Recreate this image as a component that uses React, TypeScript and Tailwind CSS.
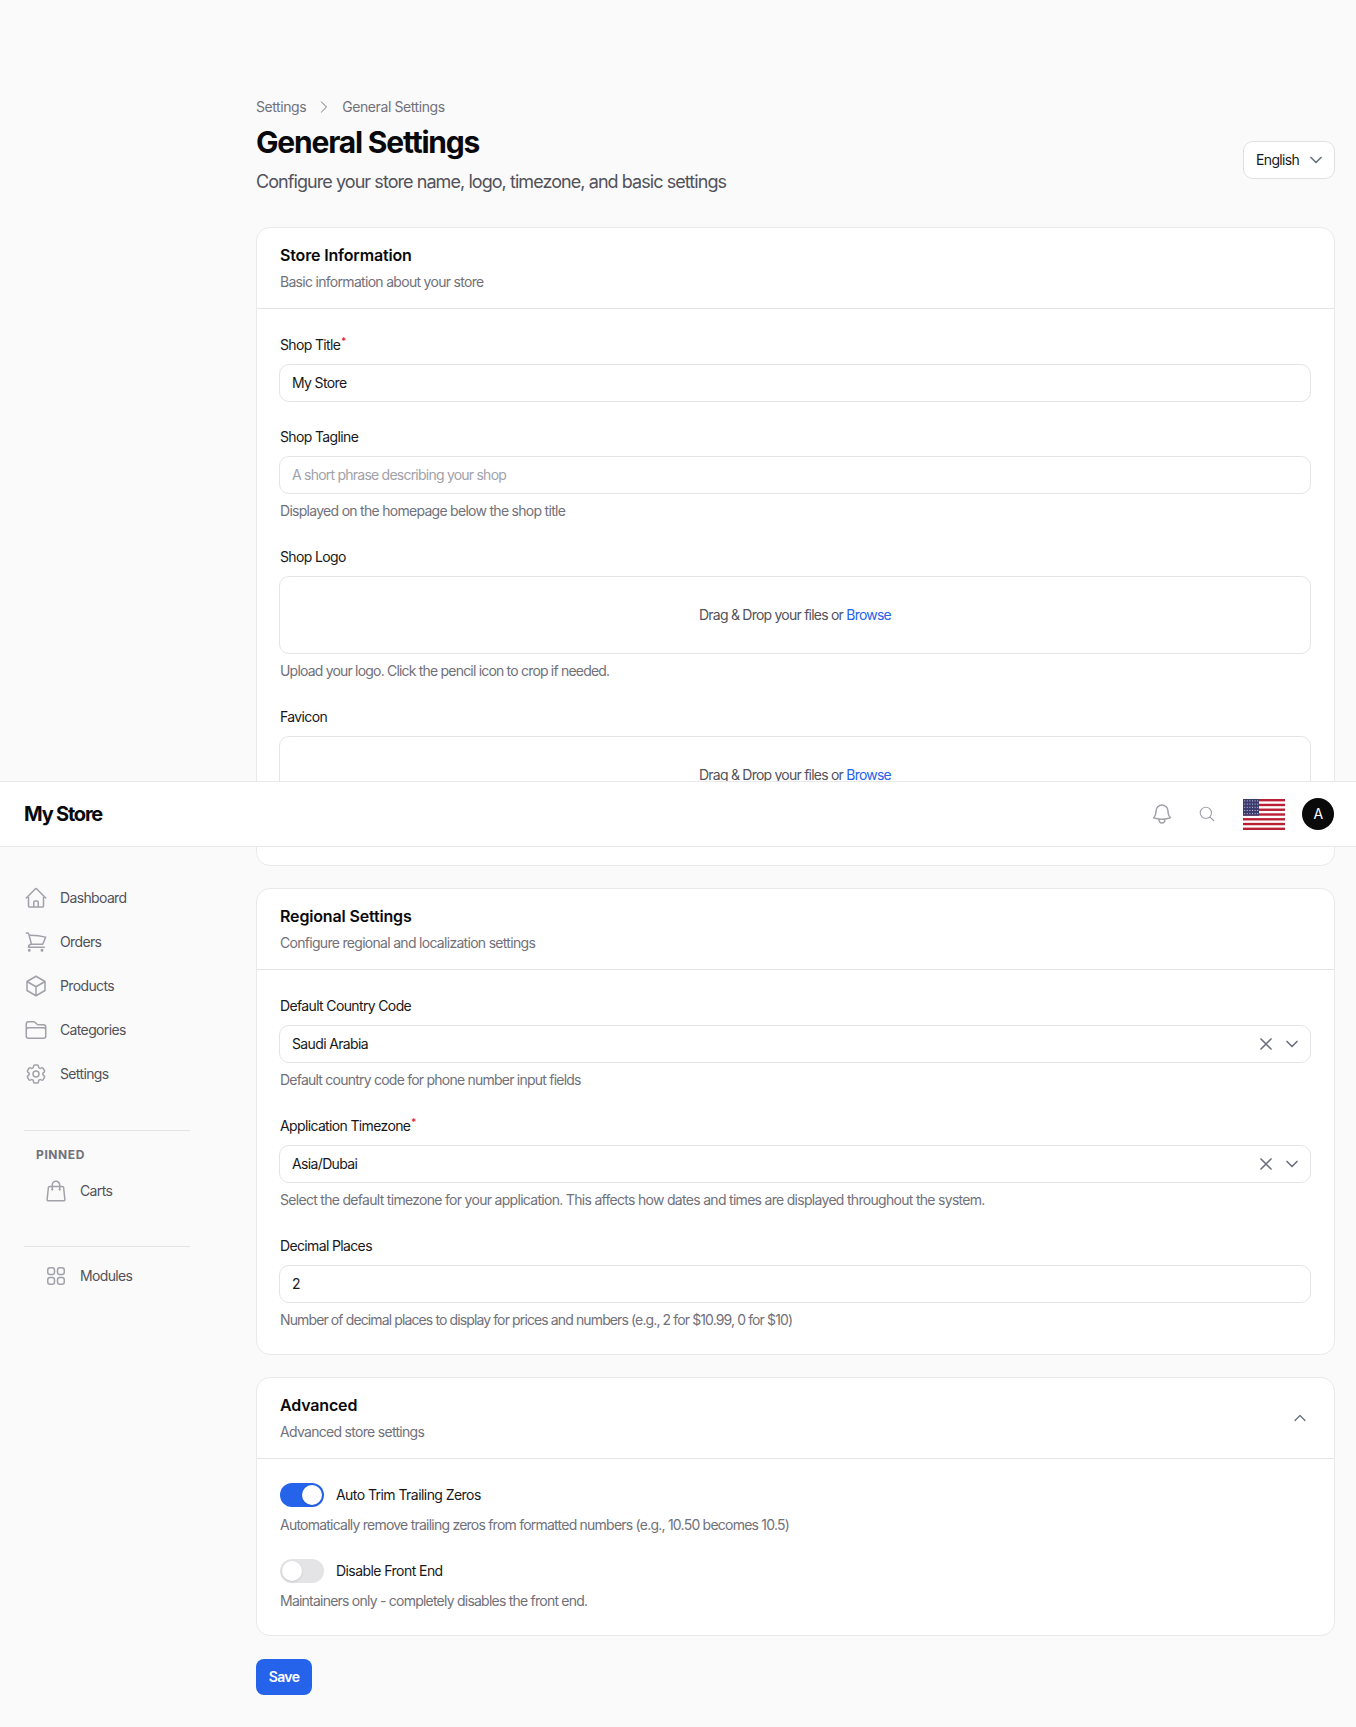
import type { ReactNode } from "react";
import {
  HiOutlineBell,
  HiOutlineCog6Tooth,
  HiOutlineCube,
  HiOutlineFolder,
  HiOutlineHome,
  HiOutlineMagnifyingGlass,
  HiOutlineShoppingBag,
  HiOutlineShoppingCart,
  HiOutlineSquares2X2,
  HiOutlineXMark,
  HiOutlineChevronDown,
  HiOutlineChevronRight,
  HiOutlineChevronUp,
} from "react-icons/hi2";

const navItems = [
  { label: "Dashboard", icon: HiOutlineHome },
  { label: "Orders", icon: HiOutlineShoppingCart },
  { label: "Products", icon: HiOutlineCube },
  { label: "Categories", icon: HiOutlineFolder },
  { label: "Settings", icon: HiOutlineCog6Tooth },
];

const UsFlag = () => (
  <svg width="42" height="31" viewBox="0 0 42 31" aria-hidden="true">
    <rect width="42" height="31" fill="#fff" />
    {[0, 1, 2, 3, 4, 5, 6].map((i) => (
      <rect key={i} y={i * 4.77} width="42" height="2.38" fill="#b92036" />
    ))}
    <rect width="16" height="16.7" fill="#3c3b6e" />
    {[0, 1, 2, 3, 4].map((r) =>
      [0, 1, 2, 3, 4, 5].map((c) => (
        <rect key={`${r}-${c}`} x={1.2 + c * 2.6} y={1.4 + r * 3.2} width="1" height="1" fill="#c9c9e0" />
      ))
    )}
  </svg>
);

const Label = ({ children, required }: { children: ReactNode; required?: boolean }) => (
  <div className="h-5 text-sm leading-5 text-[#18181b]">
    {children}
    {required && <sup className="ml-px text-[10px] text-red-600">*</sup>}
  </div>
);

const Help = ({ children, tracking = "tracking-[-0.055em]" }: { children: ReactNode; tracking?: string }) => (
  <p className={`mt-[7px] h-5 text-sm leading-5 text-[#71717a] ${tracking}`}>{children}</p>
);

const TextBox = ({ value, placeholder }: { value?: string; placeholder?: string }) => (
  <div
    className={`-ml-px mt-[9px] flex h-[38px] items-center rounded-[10px] border border-[#e4e4e7] bg-white px-3 text-sm ${
      value ? "text-[#18181b]" : "tracking-[-0.055em] text-[#a1a1aa]"
    }`}
  >
    {value ?? placeholder}
  </div>
);

const SelectBox = ({ value }: { value: string }) => (
  <div className="-ml-px mt-[9px] flex h-[38px] items-center justify-between rounded-[10px] border border-[#e4e4e7] bg-white pl-3 pr-[10px] text-sm text-[#18181b]">
    <span>{value}</span>
    <span className="flex items-center gap-2 text-[#6b7280]">
      <HiOutlineXMark className="size-5" strokeWidth={2} />
      <HiOutlineChevronDown className="size-4" strokeWidth={2.5} />
    </span>
  </div>
);

const DropZone = () => (
  <div className="-ml-px mt-[9px] flex h-[78px] items-center justify-center rounded-[10px] border border-[#e4e4e7] bg-white text-sm tracking-[-0.055em] text-[#52525b]">
    <span>
      Drag &amp; Drop your files or <span className="text-[#2563eb]">Browse</span>
    </span>
  </div>
);

const Toggle = ({ on }: { on?: boolean }) => (
  <span
    className={`flex h-6 w-11 items-center rounded-full p-0.5 ${
      on ? "justify-end bg-[#2563eb]" : "justify-start bg-[#e4e4e7]"
    }`}
  >
    <span className="size-5 rounded-full bg-white shadow-sm" />
  </span>
);

const Card = ({
  title,
  subtitle,
  action,
  children,
}: {
  title: string;
  subtitle: string;
  action?: ReactNode;
  children: ReactNode;
}) => (
  <section className="rounded-[14px] border border-[#e9e9eb] bg-white">
    <header className="flex h-[81px] items-center justify-between border-b border-[#e4e4e7] pl-[23px] pr-[26px]">
      <div>
        <h2 className="mb-[6px] h-[22px] text-base font-semibold leading-[22px] tracking-[-0.01em] text-[#09090b]">
          {title}
        </h2>
        <p className="h-5 text-sm leading-5 tracking-[-0.05em] text-[#71717a]">{subtitle}</p>
      </div>
      {action}
    </header>
    <div className="pb-6 pl-[23px] pr-[23px] pt-[26px]">{children}</div>
  </section>
);

export default function App() {
  return (
    <div
      className="relative flex min-h-[1727px] bg-[#fafafa] tracking-[-0.04em]"
      style={{ fontFamily: "Inter, 'Liberation Sans', sans-serif" }}
    >
      {/* stuck topbar, lands mid page in the full page capture */}
      <div className="absolute inset-x-0 top-[781px] z-10 flex h-[66px] items-center justify-between border-y border-[#e9e9eb] bg-white pl-6 pr-[22px]">
        <span className="text-xl font-bold tracking-[-0.06em] text-[#09090b]">My Store</span>
        <div className="flex items-center">
          <HiOutlineBell className="size-6 text-[#a1a1aa]" />
          <HiOutlineMagnifyingGlass className="ml-6 size-[18px] text-[#a1a1aa]" />
          <span className="ml-[27px] flex">
            <UsFlag />
          </span>
          <span className="ml-[17px] flex size-8 items-center justify-center rounded-full bg-[#0a0a0a] text-sm text-white">
            A
          </span>
        </div>
      </div>

      <aside className="w-[256px] shrink-0 pt-[876px]">
        <nav className="flex flex-col pl-6">
          {navItems.map(({ label, icon: Icon }) => (
            <a key={label} className="flex h-11 items-center text-sm text-[#52525b]">
              <Icon className="size-6 text-[#a1a1aa]" />
              <span className="ml-3">{label}</span>
            </a>
          ))}
        </nav>
        <div className="ml-6 mt-[34px] w-[166px] border-t border-[#e4e4e7]" />
        <div className="ml-9 mt-4 text-xs font-bold leading-4 tracking-[0.05em] text-[#71717a]">PINNED</div>
        <a className="ml-[44px] mt-[6px] flex h-11 items-center text-sm text-[#52525b]">
          <HiOutlineShoppingBag className="size-6 text-[#a1a1aa]" />
          <span className="ml-3">Carts</span>
        </a>
        <div className="ml-6 mt-[33px] w-[166px] border-t border-[#e4e4e7]" />
        <a className="ml-[44px] mt-[7px] flex h-11 items-center text-sm text-[#52525b]">
          <HiOutlineSquares2X2 className="size-6 text-[#a1a1aa]" />
          <span className="ml-3">Modules</span>
        </a>
      </aside>

      <main className="flex-1 pr-[21px] pt-[97px]">
        <div className="flex h-5 items-center text-sm tracking-[-0.03em] text-[#71717a]">
          <span>Settings</span>
          <HiOutlineChevronRight className="mx-[10px] size-4" />
          <span>General Settings</span>
        </div>
        <div className="flex items-center justify-between">
          <div>
            <h1 className="mt-[7px] h-9 text-[30px] font-bold leading-9 tracking-[-0.04em] text-[#09090b]">
              General Settings
            </h1>
            <p className="mt-[8px] h-7 text-lg leading-7 tracking-[-0.052em] text-[#52525b]">
              Configure your store name, logo, timezone, and basic settings
            </p>
          </div>
          <div className="mt-[7px] flex h-[38px] w-[92px] items-center justify-between rounded-[10px] border border-[#e0e0e3] bg-white pl-[12px] pr-[10px] text-sm text-[#18181b]">
            English
            <HiOutlineChevronDown className="size-4 text-[#6b7280]" strokeWidth={2.5} />
          </div>
        </div>

        <div className="mt-[31px] flex flex-col gap-[22px]">
          <Card title="Store Information" subtitle="Basic information about your store">
            <Label required>Shop Title</Label>
            <TextBox value="My Store" />
            <div className="mt-[25px]">
              <Label>Shop Tagline</Label>
              <TextBox placeholder="A short phrase describing your shop" />
              <Help tracking="tracking-[-0.051em]">Displayed on the homepage below the shop title</Help>
            </div>
            <div className="mt-[26px]">
              <Label>Shop Logo</Label>
              <DropZone />
              <Help tracking="tracking-[-0.0575em]">Upload your logo. Click the pencil icon to crop if needed.</Help>
            </div>
            <div className="mt-[26px]">
              <Label>Favicon</Label>
              <DropZone />
              <Help>Upload your favicon.</Help>
            </div>
          </Card>

          <Card title="Regional Settings" subtitle="Configure regional and localization settings">
            <Label>Default Country Code</Label>
            <SelectBox value="Saudi Arabia" />
            <Help>Default country code for phone number input fields</Help>
            <div className="mt-[26px]">
              <Label required>Application Timezone</Label>
              <SelectBox value="Asia/Dubai" />
              <Help tracking="tracking-[-0.05em]">
                Select the default timezone for your application. This affects how dates and times are displayed throughout the system.
              </Help>
            </div>
            <div className="mt-[26px]">
              <Label>Decimal Places</Label>
              <TextBox value="2" />
              <Help tracking="tracking-[-0.063em]">
                Number of decimal places to display for prices and numbers (e.g., 2 for $10.99, 0 for $10)
              </Help>
            </div>
          </Card>

          <Card
            title="Advanced"
            subtitle="Advanced store settings"
            action={<HiOutlineChevronUp className="size-4 text-[#6b7280]" strokeWidth={2} />}
          >
            <div className="-mt-[2px] flex items-center gap-3 text-sm tracking-[-0.04em] text-[#18181b]">
              <Toggle on />
              Auto Trim Trailing Zeros
            </div>
            <div className="pt-px">
              <Help>Automatically remove trailing zeros from formatted numbers (e.g., 10.50 becomes 10.5)</Help>
            </div>
            <div className="mt-[24px] flex items-center gap-3 text-sm tracking-[-0.04em] text-[#18181b]">
              <Toggle />
              Disable Front End
            </div>
            <div className="pt-px">
              <Help>Maintainers only - completely disables the front end.</Help>
            </div>
          </Card>
        </div>

        <button className="mt-[23px] h-9 w-14 rounded-lg bg-[#2563eb] text-sm font-semibold text-white">Save</button>
      </main>
    </div>
  );
}
